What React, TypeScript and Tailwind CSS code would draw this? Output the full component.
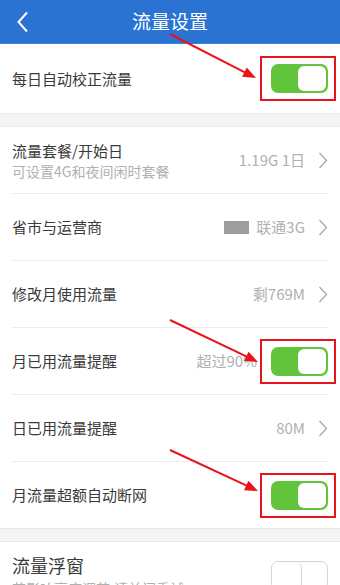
import { ReactNode } from 'react';

const font = { fontFamily: '"Noto Sans CJK SC", "Noto Sans", sans-serif' };

function Chevron() {
  return (
    <svg width="10" height="17" viewBox="0 0 10 17" className="shrink-0">
      <path d="M1.5 1 L8.5 8.5 L1.5 16" fill="none" stroke="#a8a8a8" strokeWidth="1.3" />
    </svg>
  );
}

function Toggle({ on, marked }: { on: boolean; marked?: boolean }) {
  return (
    <div className="relative shrink-0">
      <div
        className={
          on
            ? 'flex h-[29px] w-[57px] rounded-[7px] border-2 border-[#62c43a] bg-[#62c43a]'
            : 'flex h-[29px] w-[57px] rounded-[7px] border border-[#d4d4d4] bg-white'
        }
      >
        {on ? (
          <>
            <div className="flex-1" />
            <div className="h-full w-[28px] rounded-[6px] bg-white" />
          </>
        ) : (
          <>
            <div className="h-full w-[30px] rounded-[6px] border-r border-[#d4d4d4] bg-white" />
            <div className="flex-1" />
          </>
        )}
      </div>
      {marked && (
        <div className="absolute -left-[11px] -right-[8px] -top-[8px] -bottom-[8px] border-2 border-[#e8141b]" />
      )}
    </div>
  );
}

function Row({
  title,
  sub,
  right,
  height = 'h-[66px]',
}: {
  title: string;
  sub?: string;
  right?: ReactNode;
  height?: string;
}) {
  return (
    <div className={`flex items-center justify-between px-3 ${height}`}>
      <div className="flex flex-col">
        <span className="text-[15px] leading-[22px] text-[#3a3a3a]">{title}</span>
        {sub && <span className="text-[14px] leading-[18px] text-[#b0b0b0]">{sub}</span>}
      </div>
      {right}
    </div>
  );
}

function Value({ text, children }: { text: string; children?: ReactNode }) {
  return (
    <div className="flex items-center gap-[13px]">
      {children}
      <span className="text-[15px] text-[#b0b0b0]">{text}</span>
      <Chevron />
    </div>
  );
}

function Divider() {
  return <div className="mx-3 h-px bg-[#ededed]" />;
}

function Gap() {
  return <div className="h-[14px] border-y border-[#e8e8e8] bg-[#f4f4f4]" />;
}

function Arrow({ x1, y1, x2, y2 }: { x1: number; y1: number; x2: number; y2: number }) {
  const a = Math.atan2(y2 - y1, x2 - x1);
  const l = 14;
  const w = 0.38;
  const p1 = `${x2 - l * Math.cos(a - w)},${y2 - l * Math.sin(a - w)}`;
  const p2 = `${x2 - l * Math.cos(a + w)},${y2 - l * Math.sin(a + w)}`;
  return (
    <g>
      <line x1={x1} y1={y1} x2={x2 - 6 * Math.cos(a)} y2={y2 - 6 * Math.sin(a)} stroke="#e8141b" strokeWidth="2" />
      <polygon points={`${x2},${y2} ${p1} ${p2}`} fill="#e8141b" />
    </g>
  );
}

export default function App() {
  return (
    <div className="relative h-[585px] w-[340px] overflow-hidden bg-white" style={font}>
      <div className="relative flex h-[44px] items-center justify-center border-b border-[#3b82dc] bg-[#2a73d3]">
        <svg width="14" height="22" viewBox="0 0 14 22" className="absolute left-[16px] top-[11px]">
          <path d="M11 1.5 L2.5 11 L11 20.5" fill="none" stroke="white" strokeWidth="2" />
        </svg>
        <span className="text-[19px] text-white">流量设置</span>
      </div>

      <Row title="每日自动校正流量" height="h-[69px]" right={<Toggle on marked />} />
      <Gap />

      <Row
        title="流量套餐/开始日"
        sub="可设置4G和夜间闲时套餐"
        right={<Value text="1.19G 1日" />}
      />
      <Divider />
      <Row
        title="省市与运营商"
        right={
          <Value text="联通3G">
            <div className="-mr-[6px] h-[13px] w-[25px] bg-[#9e9e9e]" />
          </Value>
        }
      />
      <Divider />
      <Row title="修改月使用流量" right={<Value text="剩769M" />} />
      <Divider />
      <Row
        title="月已用流量提醒"
        right={
          <div className="flex items-center gap-[14px]">
            <span className="text-[15px] text-[#b0b0b0]">超过90%</span>
            <Toggle on marked />
          </div>
        }
      />
      <Divider />
      <Row title="日已用流量提醒" right={<Value text="80M" />} />
      <Divider />
      <Row title="月流量超额自动断网" right={<Toggle on marked />} />
      <Gap />

      <div className="flex items-start justify-between px-3 pt-[10px]">
        <div className="flex flex-col">
          <span className="text-[18px] leading-[26px] text-[#3a3a3a]">流量浮窗</span>
          <span className="text-[14px] leading-[20px] text-[#b0b0b0]">若影响亮度调节,请关闭重试</span>
        </div>
        <div className="mt-[9px]">
          <Toggle on={false} />
        </div>
      </div>

      <svg className="pointer-events-none absolute left-0 top-0" width="340" height="585">
        <Arrow x1={170} y1={34} x2={256} y2={78} />
        <Arrow x1={170} y1={320} x2={258} y2={362} />
        <Arrow x1={170} y1={450} x2={258} y2={491} />
      </svg>
    </div>
  );
}
